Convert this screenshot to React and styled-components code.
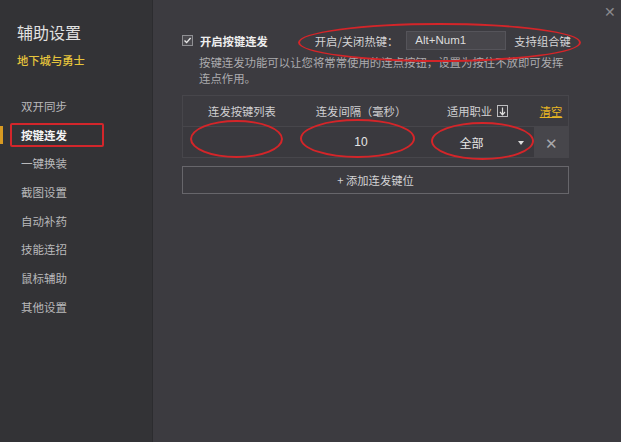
import React from 'react';
import styled, { createGlobalStyle } from 'styled-components';

const Global = createGlobalStyle`
  html, body { margin: 0; padding: 0; background: #3c3b40; }
  * { box-sizing: border-box; }
`;

const Window = styled.div`
  width: 621px;
  height: 442px;
  display: flex;
  font-family: "Noto Sans CJK SC", "Noto Sans", sans-serif;
  overflow: hidden;
`;

const Sidebar = styled.div`
  width: 153px;
  background: #333336;
  border-right: 1px solid #2c2c2f;
  padding-top: 20px;
  position: relative;
`;

const Title = styled.div`
  padding-left: 17px;
  font-size: 16px;
  line-height: 24px;
  color: #e2e2e2;
`;

const Game = styled.div`
  padding-left: 17px;
  margin-top: 8px;
  font-size: 11.3px;
  line-height: 16px;
  color: #e6c43c;
  font-weight: 500;
`;

const Menu = styled.div`
  margin-top: 24px;
  display: flex;
  flex-direction: column;
`;

const MenuItem = styled.div`
  position: relative;
  height: 28.7px;
  line-height: 28.7px;
  padding-left: 21px;
  font-size: 11.5px;
  color: ${p => (p.active ? '#f4f4f4' : '#b9b9bb')};
  font-weight: ${p => (p.active ? 700 : 400)};

  ${p => p.active && `
    &::after {
      content: '';
      position: absolute;
      left: 10px;
      width: 90px;
      top: 2px;
      bottom: 2px;
      border: 2px solid #d3262b;
      border-radius: 2px;
    }
    &::before {
      content: '';
      position: absolute;
      left: 0;
      width: 3px;
      top: 5px;
      bottom: 5px;
      background: #d89a22;
    }
  `}
`;

const Main = styled.div`
  flex: 1;
  position: relative;
  background: #3c3b40;
  padding: 31px 0 0 29px;
`;

const Close = styled.div`
  position: absolute;
  right: 5px;
  top: 4px;
  font-size: 14px;
  line-height: 14px;
  color: #8a8a8e;
`;

const TopRow = styled.div`
  display: flex;
  align-items: center;
  height: 19px;
  font-size: 11.3px;
`;

const Check = styled.div`
  width: 11px;
  height: 11px;
  border: 1px solid #8f8f93;
  background: #4a494e;
  display: flex;
  align-items: center;
  justify-content: center;
  margin-right: 7px;
`;

const Label = styled.span`
  color: #eeeeee;
  font-weight: 700;
`;

const HotLabel = styled.span`
  color: #d4d4d6;
  margin-left: 47px;
`;

const HotInput = styled.div`
  width: 100px;
  height: 19px;
  margin-left: 8px;
  background: #47464b;
  border: 1px solid #55545a;
  color: #dcdcdc;
  font-family: "Liberation Sans", Arial, sans-serif;
  font-size: 11.5px;
  line-height: 17px;
  padding-left: 8px;
`;

const HotHint = styled.span`
  color: #d4d4d6;
  margin-left: 8px;
`;

const Desc = styled.div`
  margin: 4px 0 0 17px;
  font-size: 11.4px;
  line-height: 16px;
  color: #acacaf;
  white-space: nowrap;
`;

const Table = styled.div`
  margin-top: 9px;
  width: 387px;
  border: 1px solid #47464b;
`;

const Grid = styled.div`
  display: grid;
  grid-template-columns: 118px 120px 113px 1fr;
  height: ${p => p.h}px;
  align-items: center;
  border-top: ${p => (p.line ? '1px solid #47464b' : 'none')};
  background: ${p => p.bg || 'transparent'};
`;

const Head = styled.div`
  text-align: center;
  font-size: 11.3px;
  color: #d0d0d2;
  display: flex;
  align-items: center;
  justify-content: center;
  gap: 5px;
`;

const SortBox = styled.span`
  width: 11px;
  height: 12px;
  border: 1px solid #bdbdc0;
  display: inline-flex;
  align-items: center;
  justify-content: center;
`;

const Clear = styled.div`
  color: #e8b623;
  font-size: 11.3px;
  text-decoration: underline;
  text-align: center;
`;

const Cell = styled.div`
  text-align: center;
  font-size: 12px;
  color: #e6e6e6;
  font-family: "Liberation Sans", "Noto Sans CJK SC", sans-serif;
  position: relative;
  height: 100%;
  display: flex;
  align-items: center;
  justify-content: center;
  padding-right: ${p => p.pr || 0}px;
`;

const Caret = styled.span`
  position: absolute;
  right: 10px;
  top: 50%;
  margin-top: -1px;
  border-left: 3px solid transparent;
  border-right: 3px solid transparent;
  border-top: 4px solid #dcdcdc;
`;

const RemoveCell = styled.div`
  height: 100%;
  background: #47464b;
  display: flex;
  align-items: center;
  justify-content: center;
  color: #a8a8ab;
  font-size: 15px;
`;

const AddButton = styled.div`
  margin-top: 8px;
  width: 387px;
  height: 28px;
  border: 1px solid #67666b;
  display: flex;
  align-items: center;
  justify-content: center;
  color: #d2d2d4;
  font-size: 11.3px;
`;

const Ellipse = styled.div`
  position: absolute;
  border: 2px solid #d42529;
  border-radius: 50%;
  pointer-events: none;
`;

const menu = ['双开同步', '按键连发', '一键换装', '截图设置', '自动补药', '技能连招', '鼠标辅助', '其他设置'];

const marks = [
  { left: 145, top: 23, width: 283, height: 39 },
  { left: 37, top: 120, width: 93, height: 38 },
  { left: 147, top: 119, width: 115, height: 39 },
  { left: 278, top: 122, width: 103, height: 38 },
];

export default function App() {
  return (
    <Window>
      <Global />
      <Sidebar>
        <Title>辅助设置</Title>
        <Game>地下城与勇士</Game>
        <Menu>
          {menu.map(m => (
            <MenuItem key={m} active={m === '按键连发'}>{m}</MenuItem>
          ))}
        </Menu>
      </Sidebar>
      <Main>
        <Close>✕</Close>
        <TopRow>
          <Check>
            <svg width="9" height="9" viewBox="0 0 9 9">
              <path d="M1.5 4.6 L3.6 6.6 L7.6 2" stroke="#e8e8e8" strokeWidth="1.4" fill="none" />
            </svg>
          </Check>
          <Label>开启按键连发</Label>
          <HotLabel>开启/关闭热键：</HotLabel>
          <HotInput>Alt+Num1</HotInput>
          <HotHint>支持组合键</HotHint>
        </TopRow>
        <Desc>
          按键连发功能可以让您将常常使用的连点按钮，设置为按住不放即可发挥<br />连点作用。
        </Desc>
        <Table>
          <Grid h={30}>
            <Head>连发按键列表</Head>
            <Head>连发间隔（毫秒）</Head>
            <Head>
              适用职业
              <SortBox>
                <svg width="7" height="9" viewBox="0 0 7 9">
                  <path d="M3.5 0.5 V7.5 M1 5 L3.5 7.8 L6 5" stroke="#e0e0e0" strokeWidth="1.2" fill="none" />
                </svg>
              </SortBox>
            </Head>
            <Clear>清空</Clear>
          </Grid>
          <Grid h={31} line bg="#3a393e">
            <Cell />
            <Cell>10</Cell>
            <Cell pr={12}>全部<Caret /></Cell>
            <RemoveCell>✕</RemoveCell>
          </Grid>
        </Table>
        <AddButton>+ 添加连发键位</AddButton>
        {marks.map((e, i) => (
          <Ellipse key={i} style={e} />
        ))}
      </Main>
    </Window>
  );
}
